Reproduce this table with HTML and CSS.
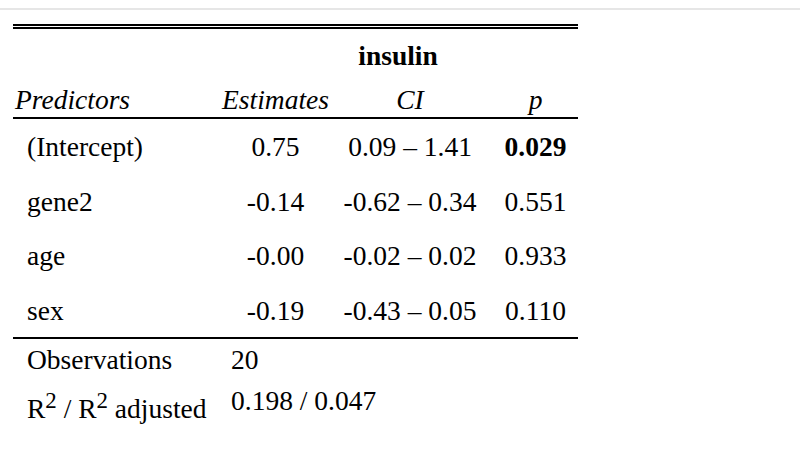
FILE: index.html
```html
<!DOCTYPE html>
<html lang="en">
<head>
<meta charset="utf-8">
<title>insulin model</title>
<link rel="stylesheet" href="styles.css">
</head>
<body>
<div class="topbar"></div>
<table class="model">
  <colgroup>
    <col class="c1"><col class="c2"><col class="c3"><col class="c4">
  </colgroup>
  <thead>
    <tr class="deprow">
      <th class="blank"></th>
      <th colspan="3" class="depvar">insulin</th>
    </tr>
    <tr class="colhead">
      <th class="pred">Predictors</th>
      <th>Estimates</th>
      <th>CI</th>
      <th class="pcol">p</th>
    </tr>
  </thead>
  <tbody>
    <tr><td class="name">(Intercept)</td><td>0.75</td><td>0.09&nbsp;&ndash;&nbsp;1.41</td><td class="pcol"><strong>0.029</strong></td></tr>
    <tr><td class="name">gene2</td><td>-0.14</td><td>-0.62&nbsp;&ndash;&nbsp;0.34</td><td class="pcol">0.551</td></tr>
    <tr><td class="name">age</td><td>-0.00</td><td>-0.02&nbsp;&ndash;&nbsp;0.02</td><td class="pcol">0.933</td></tr>
    <tr><td class="name">sex</td><td>-0.19</td><td>-0.43&nbsp;&ndash;&nbsp;0.05</td><td class="pcol">0.110</td></tr>
  </tbody>
  <tfoot>
    <tr class="firstsum"><td class="name">Observations</td><td colspan="3" class="val">20</td></tr>
    <tr class="sum"><td class="name">R<sup>2</sup> / R<sup>2</sup> adjusted</td><td colspan="3" class="val">0.198 / 0.047</td></tr>
  </tfoot>
</table>
</body>
</html>
```
FILE: styles.css
```css
html, body {
  margin: 0;
  padding: 0;
  background: #ffffff;
}

body {
  font-family: "Liberation Serif", "Times New Roman", serif;
  color: #000000;
}

.topbar {
  margin-top: 8px;
  height: 2px;
  background: #e6e6e6;
}

.model {
  margin: 14px 0 0 13px;
  width: 565px;
  table-layout: fixed;
  border-collapse: separate;
  border-spacing: 0;
  font-size: 27.5px;
  line-height: 31px;
}

.c1 { width: 205px; }
.c2 { width: 115px; }
.c3 { width: 154px; }
.c4 { width: 91px; }

.model th,
.model td {
  padding: 0;
  vertical-align: top;
  text-align: center;
  white-space: nowrap;
}

.deprow th {
  border-top: 5px double #000000;
  padding-top: 11px;
  padding-bottom: 6.5px;
}

.depvar {
  font-weight: bold;
}

.colhead th {
  font-style: italic;
  font-weight: normal;
  padding-top: 6.5px;
  padding-bottom: 2px;
  border-bottom: 2px solid #000000;
}

.colhead .pred {
  text-align: left;
  padding-left: 2px;
}

.model tbody td {
  padding-top: 12px;
  padding-bottom: 11.5px;
}

.model .pcol {
  padding-left: 6px;
}

.model td.name {
  text-align: left;
  padding-left: 14px;
}

.model td.val {
  text-align: left;
  padding-left: 13px;
}

.firstsum td {
  border-top: 2px solid #000000;
  padding-top: 4.5px;
  padding-bottom: 5px;
}

.sum td {
  padding-top: 5.5px;
  padding-bottom: 5px;
}
```
